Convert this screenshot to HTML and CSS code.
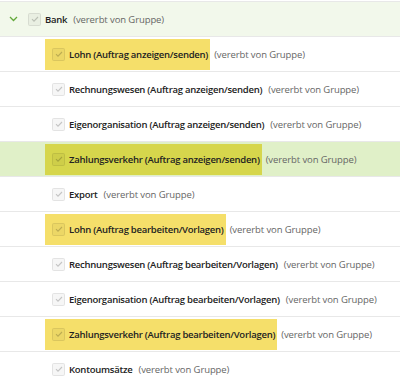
FILE: index.html
```html
<!DOCTYPE html>
<html lang="de">
<head>
  <meta charset="UTF-8">
  <title>Rechte</title>
  <link rel="stylesheet" href="styles.css">
</head>
<body>

<ul class="tree">
  <li class="row group">
    <svg class="chevron" width="9" height="6" viewBox="0 0 9 6"><path d="M1 1l3.5 3.5L8 1" fill="none" stroke="#62a83a" stroke-width="1.3"/></svg>
    <span class="box"><svg width="10" height="10" viewBox="0 0 10 10"><path d="M2 5.2l2 2L8 3" fill="none" stroke="rgba(0,0,0,0.2)" stroke-width="1.1"/></svg></span>
    <span class="label">Bank</span>
    <span class="note">(vererbt von Gruppe)</span>
  </li>
  <li class="row child">
    <span class="mark"><span class="box"><svg width="10" height="10" viewBox="0 0 10 10"><path d="M2 5.2l2 2L8 3" fill="none" stroke="rgba(0,0,0,0.2)" stroke-width="1.1"/></svg></span><span class="label">Lohn (Auftrag anzeigen/senden)</span></span>
    <span class="note">(vererbt von Gruppe)</span>
  </li>
  <li class="row child">
    <span class="box"><svg width="10" height="10" viewBox="0 0 10 10"><path d="M2 5.2l2 2L8 3" fill="none" stroke="rgba(0,0,0,0.2)" stroke-width="1.1"/></svg></span>
    <span class="label">Rechnungswesen (Auftrag anzeigen/senden)</span>
    <span class="note">(vererbt von Gruppe)</span>
  </li>
  <li class="row child">
    <span class="box"><svg width="10" height="10" viewBox="0 0 10 10"><path d="M2 5.2l2 2L8 3" fill="none" stroke="rgba(0,0,0,0.2)" stroke-width="1.1"/></svg></span>
    <span class="label">Eigenorganisation (Auftrag anzeigen/senden)</span>
    <span class="note">(vererbt von Gruppe)</span>
  </li>
  <li class="row child selected">
    <span class="mark"><span class="box"><svg width="10" height="10" viewBox="0 0 10 10"><path d="M2 5.2l2 2L8 3" fill="none" stroke="rgba(0,0,0,0.2)" stroke-width="1.1"/></svg></span><span class="label">Zahlungsverkehr (Auftrag anzeigen/senden)</span></span>
    <span class="note">(vererbt von Gruppe)</span>
  </li>
  <li class="row child">
    <span class="box"><svg width="10" height="10" viewBox="0 0 10 10"><path d="M2 5.2l2 2L8 3" fill="none" stroke="rgba(0,0,0,0.2)" stroke-width="1.1"/></svg></span>
    <span class="label">Export</span>
    <span class="note">(vererbt von Gruppe)</span>
  </li>
  <li class="row child">
    <span class="mark"><span class="box"><svg width="10" height="10" viewBox="0 0 10 10"><path d="M2 5.2l2 2L8 3" fill="none" stroke="rgba(0,0,0,0.2)" stroke-width="1.1"/></svg></span><span class="label">Lohn (Auftrag bearbeiten/Vorlagen)</span></span>
    <span class="note">(vererbt von Gruppe)</span>
  </li>
  <li class="row child">
    <span class="box"><svg width="10" height="10" viewBox="0 0 10 10"><path d="M2 5.2l2 2L8 3" fill="none" stroke="rgba(0,0,0,0.2)" stroke-width="1.1"/></svg></span>
    <span class="label">Rechnungswesen (Auftrag bearbeiten/Vorlagen)</span>
    <span class="note">(vererbt von Gruppe)</span>
  </li>
  <li class="row child">
    <span class="box"><svg width="10" height="10" viewBox="0 0 10 10"><path d="M2 5.2l2 2L8 3" fill="none" stroke="rgba(0,0,0,0.2)" stroke-width="1.1"/></svg></span>
    <span class="label">Eigenorganisation (Auftrag bearbeiten/Vorlagen)</span>
    <span class="note">(vererbt von Gruppe)</span>
  </li>
  <li class="row child">
    <span class="mark"><span class="box"><svg width="10" height="10" viewBox="0 0 10 10"><path d="M2 5.2l2 2L8 3" fill="none" stroke="rgba(0,0,0,0.2)" stroke-width="1.1"/></svg></span><span class="label">Zahlungsverkehr (Auftrag bearbeiten/Vorlagen)</span></span>
    <span class="note">(vererbt von Gruppe)</span>
  </li>
  <li class="row child">
    <span class="box"><svg width="10" height="10" viewBox="0 0 10 10"><path d="M2 5.2l2 2L8 3" fill="none" stroke="rgba(0,0,0,0.2)" stroke-width="1.1"/></svg></span>
    <span class="label">Kontoumsätze</span>
    <span class="note">(vererbt von Gruppe)</span>
  </li>
</ul>

</body>
</html>
```

FILE: styles.css
```css
body {
  font-family: "Open Sans", "Noto Sans", sans-serif;
  margin: 0;
  background: #fff;
  overflow: hidden;
}

.tree {
  list-style: none;
  margin: 0;
  padding: 1px 0 0;
}

.row {
  display: flex;
  align-items: center;
  height: 34px;
  border-bottom: 1px solid #e8e8e8;
  font-size: 9.5px;
  white-space: nowrap;
}

.row.group {
  background: #f2f8eb;
  border-top: 1px solid #e8e8e8;
  padding-left: 9px;
}

.row.child {
  padding-left: 52px;
}

.row.selected {
  background: #e0f0c8;
}

.chevron {
  flex: none;
  margin-right: 10px;
}

.box {
  flex: none;
  display: inline-flex;
  align-items: center;
  justify-content: center;
  width: 11px;
  height: 11px;
  border: 1px solid rgba(0, 0, 0, 0.08);
  border-radius: 2px;
  background: rgba(0, 0, 0, 0.035);
  margin-right: 4px;
}

.label {
  font-weight: 600;
  color: #222;
  letter-spacing: -0.25px;
}

.note {
  color: #666;
  margin-left: 6px;
  letter-spacing: -0.1px;
}

.mark {
  flex: none;
  display: flex;
  align-items: center;
  height: 31px;
  margin-left: -7px;
  padding: 0 2px 0 7px;
  background: #f5df6a;
}

.selected .mark {
  background: #d6d64c;
}

.mark + .note {
  margin-left: 4px;
}
```
